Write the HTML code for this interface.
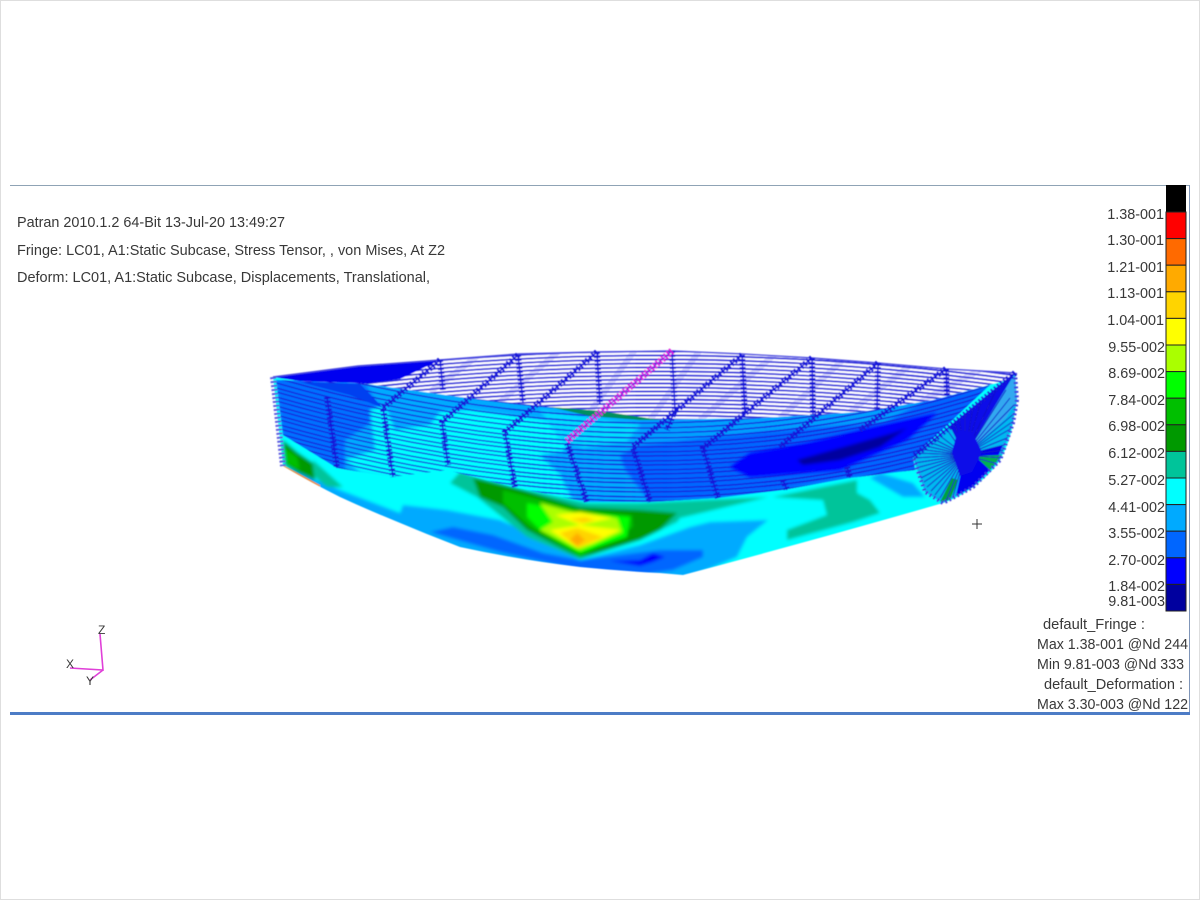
<!DOCTYPE html>
<html><head><meta charset="utf-8"><style>
html,body{margin:0;padding:0;background:#fff;width:1200px;height:900px;overflow:hidden}
svg{display:block}
text{font-family:"Liberation Sans",Arial,sans-serif;font-size:14.4px;fill:#383838}
</style></head><body>
<svg width="1200" height="900" viewBox="0 0 1200 900" xmlns="http://www.w3.org/2000/svg">
<defs>
<clipPath id="hull"><path d="M273 377L283 466Q312 483 340 497Q366 509 393 520Q426 534 460 547Q520 560 580 567Q620 571 660 573L683 575Q815 540 943 503Q960 497 973 487Q990 475 1000 460Q1010 442 1013 423Q1017 400 1015 373Z"/></clipPath>
<clipPath id="deck"><path d="M273 377L358 366L440 360L518 354L597 352L672 351L742 354L812 358L878 363L946 369L1015 373L1007 380L933 400L860 412L760 418L640 420L550 407L460 397L360 383L300 381Z"/></clipPath>
<clipPath id="wall"><path d="M276 380L360 383L460 397L550 407L640 420L760 418L860 412L933 400L990 385L913 457L915 470L850 478L783 490L718 498L650 502L587 502L513 487L447 470L392 477L337 468L283 435Z"/></clipPath>
<clipPath id="fan"><path d="M913 457L1015 373L1017 400L1013 423L1000 460L973 487L943 503L925 492Z"/></clipPath>
<path id="dl" d="M270 380Q640 325 1020 376" fill="none" stroke="#2626dc" stroke-width="1.8"/>
<path id="sl" d="M273 385Q660 497 1000 385" fill="none" stroke="#1818d8" stroke-width="1.3"/>
<filter id="soft" x="0" y="0" width="100%" height="100%"><feGaussianBlur stdDeviation="0.45"/></filter>
<filter id="cont" x="-5%" y="-5%" width="110%" height="110%"><feGaussianBlur stdDeviation="1.5"/></filter>
</defs>
<rect x="0.5" y="0.5" width="1199" height="899" fill="#fff" stroke="#dedede"/>
<rect x="10" y="185" width="1180" height="1" fill="#8fa3b5"/>
<rect x="1189" y="185" width="1" height="528" fill="#7f95b8"/>
<rect x="10" y="712" width="1180" height="3" fill="#4d7cc6"/>

<g filter="url(#soft)">
<g clip-path="url(#hull)">
<g filter="url(#cont)">
<rect x="260" y="340" width="770" height="250" fill="#00ffff"/>
<path d="M283 466L340 490L400 513L403 505L447 510L500 520L540 538L580 560L640 545L690 527L710 522L768 520L747 537L737 557L683 580L580 580L460 560L340 510Z" fill="#00aaff"/>
<path d="M430 532L453 527L493 535L543 553L580 560L620 555L660 550L703 550L703 557L673 570L640 575L580 570L500 552Z" fill="#0066ff"/>
<path d="M640 560L653 553L665 557L653 562L640 566L610 561Z" fill="#0000ff"/>
<path d="M450 483L460 472L477 477L513 487L587 503L640 503L768 497L680 518L677 522L640 540L580 559L527 537L477 497Z" fill="#00c49a"/>
<path d="M473 478L513 487L580 507L640 510L677 513L660 530L640 540L580 558L527 530L503 507L480 497Z" fill="#009900"/>
<path d="M503 490L580 510L632 515L633 527L580 557L530 527L503 503Z" fill="#00bf00"/>
<path d="M527 503L573 512L630 517L627 537L580 553L540 530L527 517Z" fill="#00ff00"/>
<path d="M540 503L577 513L617 518L622 532L580 550L540 530L553 522Z" fill="#aaff00"/>
<path d="M555 515L580 512L613 518L580 525Z" fill="#ffff00"/>
<path d="M550 530L580 525L620 530L593 543L577 548Z" fill="#ffff00"/>
<path d="M570 519L585 517L595 520L583 523Z" fill="#ffd400"/>
<path d="M560 533L577 528L603 537L578 548Z" fill="#ffd400"/>
<path d="M570 540L577 533L585 540L577 546Z" fill="#ffaa00"/>
<path d="M773 497L857 480L857 493L870 500L880 513L853 522L787 540L787 530L827 515L823 500Z" fill="#00c49a"/>
<path d="M880 473L913 483L925 497L903 497L870 478Z" fill="#00aaff"/>
<path d="M313 460L343 487L327 487L315 477Z" fill="#00c49a"/>
<path d="M283 440L297 452L313 463L315 480L297 472L285 465Z" fill="#009900"/>
<path d="M283 447L297 457L300 470L285 463Z" fill="#00bf00"/>
</g>
<path d="M283 466L320 486" stroke="#ff8800" stroke-width="1.5" fill="none"/>
<g clip-path="url(#wall)">
<g filter="url(#cont)">
<rect x="260" y="370" width="770" height="140" fill="#00aaff"/>
<path d="M276 378L365 383L380 408L368 425L345 440L345 475L283 440Z" fill="#0070ff"/>
<path d="M370 410L385 405L395 430L430 425L440 412L470 410L545 420L570 440L555 465L575 505L500 490L440 475L395 480L360 472L345 460L375 450Z" fill="#00ffff"/>
<path d="M540 410L640 425L620 450L590 450L560 440Z" fill="#00ddff"/>
<path d="M540 455L570 450L600 445L650 440L650 502L600 502L580 490L555 470Z" fill="#00aaff"/>
<path d="M620 455L650 440L700 425L940 395L1000 380L930 460L920 472L850 478L783 490L718 498L650 502L625 470Z" fill="#0066ff"/>
<path d="M640 420L930 398L885 422L760 432L640 445Z" fill="#00a0ff"/>
</g>
<use href="#sl" y="-30"/><use href="#sl" y="-24"/><use href="#sl" y="-18"/><use href="#sl" y="-13"/><use href="#sl" y="-8"/><use href="#sl" y="-3"/><use href="#sl" y="2"/><use href="#sl" y="6"/><use href="#sl" y="11"/><use href="#sl" y="15"/><use href="#sl" y="20"/><use href="#sl" y="24"/><use href="#sl" y="29"/><use href="#sl" y="33"/><use href="#sl" y="38"/><use href="#sl" y="42"/><use href="#sl" y="47"/><use href="#sl" y="51"/><use href="#sl" y="56"/><use href="#sl" y="60"/><use href="#sl" y="65"/><use href="#sl" y="69"/><use href="#sl" y="74"/><use href="#sl" y="79"/><use href="#sl" y="84"/><use href="#sl" y="89"/>
</g>
<g filter="url(#cont)">
<path d="M730 467L750 453L807 443L873 427L937 413L907 440L840 470L750 477Z" fill="#0000ff"/>
<path d="M797 460L840 448L893 433L907 428L880 447L840 460L803 465Z" fill="#00009f"/>
</g>
<path d="M300 382L360 384L383 408L350 395Z" fill="#0040f0"/>
</g>

<g clip-path="url(#deck)">
<rect x="260" y="340" width="770" height="90" fill="#fff"/>
<use href="#dl" y="0"/><use href="#dl" y="4"/><use href="#dl" y="8"/><use href="#dl" y="12"/><use href="#dl" y="16"/><use href="#dl" y="20"/><use href="#dl" y="24"/><use href="#dl" y="28"/><use href="#dl" y="32"/><use href="#dl" y="36"/><use href="#dl" y="40"/><use href="#dl" y="44"/><use href="#dl" y="48"/><use href="#dl" y="52"/><use href="#dl" y="56"/><use href="#dl" y="60"/><use href="#dl" y="64"/><use href="#dl" y="68"/>
<path d="M480 354L430 392M560 350L500 402M635 350L590 412M700 350L650 420M775 354L700 420M845 358L780 418M912 364L850 412M980 370L920 402" stroke="#4a4ae0" stroke-width="6" fill="none" opacity=".2"/>
<path d="M273 377L358 366L440 360L400 379L360 384L300 382Z" fill="#0000f0"/>
</g>
<path d="M550 407L600 411L660 420L640 420L590 416Z" fill="#009060"/>
<path d="M273 377L358 366L440 360L518 354L597 352L672 351L742 354L812 358L878 363L946 369L1015 373" fill="none" stroke="#4a4ae0" stroke-width="1.4"/>

<g clip-path="url(#fan)">
<rect x="905" y="365" width="120" height="145" fill="#00b8f0"/>
<path d="M965 455L1015 373L1017 400L1006 418Z" fill="#30a8f0"/>
<path d="M965 455L1015 373L985 395L950 425Z" fill="#0a0ae8"/>
<path d="M965 455L1003 445L990 475L973 487L955 500Z" fill="#0000f0"/>
<path d="M975 456L1002 455L990 470Z" fill="#00b050"/>
<path d="M952 478L958 480L950 500L940 502Z" fill="#00a040"/>
<path d="M965 455L935 432M965 455L930 437M965 455L926 441M965 455L922 445M965 455L918 449M965 455L915 453M965 455L914 458M965 455L915 463M965 455L916 468M965 455L918 473M965 455L921 478M965 455L924 482M965 455L927 487M965 455L931 491M965 455L935 495M965 455L940 498M965 455L946 501M965 455L952 500M965 455L1000 382M965 455L1006 390M965 455L1010 398M965 455L1014 405M965 455L1016 412M965 455L1015 420M965 455L1012 428M965 455L1012 436M965 455L1008 444M965 455L1005 450M965 455L1002 458M965 455L998 464M965 455L940 420M965 455L945 415M965 455L950 410M965 455L957 404M965 455L965 400M965 455L975 395M965 455L985 388" stroke="#1414c8" stroke-width="1" fill="none"/>
<path d="M958 430L972 432L982 452L972 472L960 476L952 452Z" fill="#0a0ae8"/>
</g>
<path d="M1015 373L1017 400L1013 423L1000 460L973 487L943 503L925 492L913 457" fill="none" stroke="#3c3ce0" stroke-width="4" stroke-dasharray="2 2.5"/>

<g fill="none" stroke="#1212d8">
<g stroke-width="1.4">
<path d="M327 397L337 468M440 360L383 408L393 477M440 360L443 390M518 355L442 422L448 465M518 355L523 402M597 352L505 432L515 487M597 352L600 405M567 443L587 502M672 351L675 410L667 430M742 355L633 447L650 502M742 355L745 415M812 358L703 448L718 498M812 358L813 415M878 363L780 447M878 363L877 410M783 480L787 490M946 369L860 430M946 369L947 395M847 467L850 478M1015 373L913 457"/>
</g>
<g stroke-width="6" stroke-dasharray="2 2">
<path d="M327 397L337 468M440 360L383 408L393 477M440 360L443 390M518 355L442 422L448 465M518 355L523 402M597 352L505 432L515 487M597 352L600 405M567 443L587 502M672 351L675 410L667 430M742 355L633 447L650 502M742 355L745 415M812 358L703 448L718 498M812 358L813 415M878 363L780 447M878 363L877 410M783 480L787 490M946 369L860 430M946 369L947 395M847 467L850 478M1015 373L913 457"/>
</g>
</g>
<path d="M273 377L283 466" fill="none" stroke="#5a5ae0" stroke-width="6" stroke-dasharray="2 2"/>
<path d="M672 351L567 441" fill="none" stroke="#e020e0" stroke-width="7" stroke-dasharray="2 1.6"/>
<path d="M672 351L567 441" fill="none" stroke="#8a20e0" stroke-width="1"/>
</g>

<path d="M972 524H982M977 519V529" stroke="#333" stroke-width="1" fill="none"/>

<rect x="1166" y="185" width="20" height="426" fill="#000"/>
<g stroke="#222" stroke-width="1">
<rect x="1166" y="212" width="20" height="26.6" fill="#ff0000"/>
<rect x="1166" y="238.6" width="20" height="26.6" fill="#ff6a00"/>
<rect x="1166" y="265.2" width="20" height="26.6" fill="#ffaa00"/>
<rect x="1166" y="291.8" width="20" height="26.6" fill="#ffd400"/>
<rect x="1166" y="318.4" width="20" height="26.6" fill="#ffff00"/>
<rect x="1166" y="345" width="20" height="26.6" fill="#aaff00"/>
<rect x="1166" y="371.6" width="20" height="26.6" fill="#00ff00"/>
<rect x="1166" y="398.2" width="20" height="26.6" fill="#00bf00"/>
<rect x="1166" y="424.8" width="20" height="26.6" fill="#009900"/>
<rect x="1166" y="451.4" width="20" height="26.6" fill="#00c49a"/>
<rect x="1166" y="478" width="20" height="26.6" fill="#00ffff"/>
<rect x="1166" y="504.6" width="20" height="26.6" fill="#00aaff"/>
<rect x="1166" y="531.2" width="20" height="26.6" fill="#0066ff"/>
<rect x="1166" y="557.8" width="20" height="26.6" fill="#0000ff"/>
<rect x="1166" y="584.4" width="20" height="26.6" fill="#00009f"/>
</g>
<g text-anchor="end">
<text x="1164" y="219">1.38-001</text>
<text x="1164" y="245">1.30-001</text>
<text x="1164" y="272">1.21-001</text>
<text x="1164" y="298">1.13-001</text>
<text x="1164" y="325">1.04-001</text>
<text x="1165" y="352">9.55-002</text>
<text x="1165" y="378">8.69-002</text>
<text x="1165" y="405">7.84-002</text>
<text x="1165" y="431">6.98-002</text>
<text x="1165" y="458">6.12-002</text>
<text x="1165" y="485">5.27-002</text>
<text x="1165" y="512">4.41-002</text>
<text x="1165" y="538">3.55-002</text>
<text x="1165" y="565">2.70-002</text>
<text x="1165" y="591">1.84-002</text>
<text x="1165" y="606">9.81-003</text>
</g>
<text x="1043" y="629" textLength="102" lengthAdjust="spacingAndGlyphs">default_Fringe :</text>
<text x="1037" y="649" textLength="151" lengthAdjust="spacingAndGlyphs">Max 1.38-001 @Nd 244</text>
<text x="1037" y="669" textLength="147" lengthAdjust="spacingAndGlyphs">Min 9.81-003 @Nd 333</text>
<text x="1044" y="689" textLength="139" lengthAdjust="spacingAndGlyphs">default_Deformation :</text>
<text x="1037" y="709" textLength="151" lengthAdjust="spacingAndGlyphs">Max 3.30-003 @Nd 122</text>

<text x="17" y="227" textLength="268" lengthAdjust="spacingAndGlyphs">Patran 2010.1.2 64-Bit 13-Jul-20 13:49:27</text>
<text x="17" y="255" textLength="428" lengthAdjust="spacingAndGlyphs">Fringe: LC01, A1:Static Subcase, Stress Tensor, , von Mises, At Z2</text>
<text x="17" y="282" textLength="413" lengthAdjust="spacingAndGlyphs">Deform: LC01, A1:Static Subcase, Displacements, Translational,</text>

<path d="M100 634L103 670L70 668M103 670L90 680" fill="none" stroke="#e040d8" stroke-width="1.6"/>
<text x="98" y="634" style="font-size:12px">Z</text>
<text x="66" y="668" style="font-size:12px">X</text>
<text x="86" y="685" style="font-size:12px">Y</text>
</svg>
</body></html>
